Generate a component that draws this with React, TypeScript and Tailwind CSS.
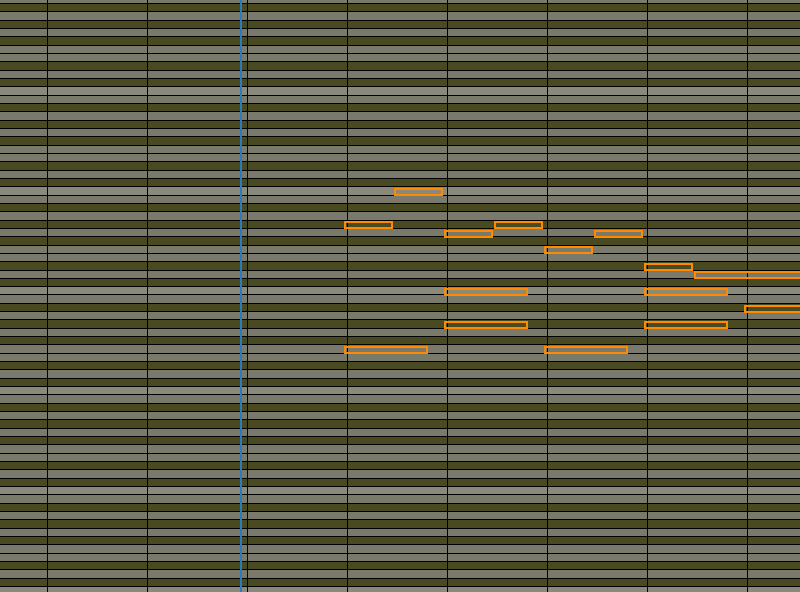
import React from "react";

const ROW_H = 100 / 12;
const TOP = -12;
const PATTERN = ["L", "G", "D", "G", "D", "G", "D", "G", "G", "D", "G", "D"];

const notes: { x: number; row: number; w: number }[] = [
  { x: 394, row: 24, w: 49 },
  { x: 344, row: 28, w: 49 },
  { x: 444, row: 29, w: 49 },
  { x: 494, row: 28, w: 49 },
  { x: 594, row: 29, w: 49 },
  { x: 544, row: 31, w: 49 },
  { x: 644, row: 33, w: 49 },
  { x: 694, row: 34, w: 120 },
  { x: 444, row: 36, w: 84 },
  { x: 644, row: 36, w: 84 },
  { x: 744, row: 38, w: 84 },
  { x: 444, row: 40, w: 84 },
  { x: 644, row: 40, w: 84 },
  { x: 344, row: 43, w: 84 },
  { x: 544, row: 43, w: 84 },
];

function Row({ kind }: { kind: string }) {
  const cls =
    kind === "L"
      ? "bg-[#8a8a7c]"
      : kind === "G"
      ? "bg-[#79796c]"
      : "bg-[#4a4a22]";
  return <div className={`h-[8.3333px] shrink-0 border-b border-black box-border ${cls}`} />;
}

export default function App() {
  const rows = Array.from({ length: 74 }, (_, i) => PATTERN[i % 12]);
  return (
    <div className="relative w-[800px] h-[592px] overflow-hidden bg-[#4a4a22]">
      <div className="flex flex-col mt-[-12.6667px]">
        {rows.map((k, i) => (
          <Row key={i} kind={k} />
        ))}
      </div>
      {/* bar lines */}
      <div className="absolute inset-0 flex pl-[47px] pointer-events-none">
        {Array.from({ length: 8 }, (_, i) => (
          <div key={i} className="w-[100px] shrink-0 h-full border-l border-black" />
        ))}
      </div>
      {/* playhead */}
      <div className="absolute top-0 bottom-0 left-[240px] w-[2px] bg-[#2a7cc0]" />
      {/* notes */}
      {notes.map((n, i) => (
        <div
          key={i}
          className="absolute h-[8px] border-2 border-[#ff8a00] box-border"
          style={{ left: n.x, top: Math.round(TOP + n.row * ROW_H), width: n.w }}
        />
      ))}
    </div>
  );
}
